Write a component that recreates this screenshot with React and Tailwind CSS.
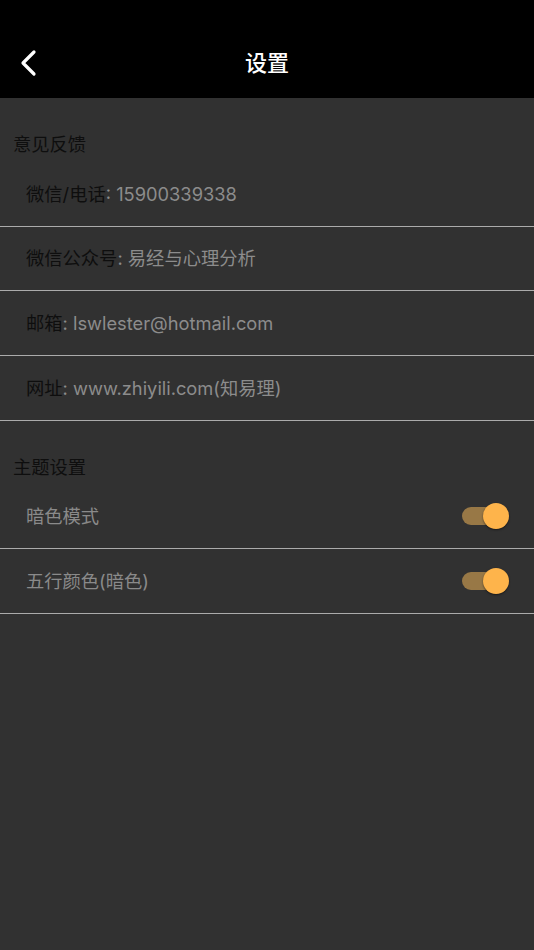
import React from "react";

const font = { fontFamily: 'Inter, "Noto Sans CJK SC", sans-serif' };

function Row({ label, value }) {
  return (
    <div className="h-[64.67px] border-b border-[#ababab] flex items-center pl-[26px] text-[18.3px] leading-[22px] whitespace-pre">
      <span className="text-[#0e0e0e]">{label}</span>
      <span className="text-[#8c8c8c]">{": " + value}</span>
    </div>
  );
}

function ToggleRow({ label }) {
  return (
    <div className="h-[64.67px] border-b border-[#ababab] flex items-center justify-between pl-[26px] pr-[25px] text-[18.3px] leading-[22px]">
      <span className="text-[#8a8a8a]">{label}</span>
      <div className="relative w-[47px] h-[26px] flex items-center">
        <div className="w-[40px] h-[18px] rounded-full bg-[#987846]" />
        <div className="absolute right-0 top-0 w-[26px] h-[26px] rounded-full bg-[#feb44b] shadow-[0_1px_2px_rgba(0,0,0,0.5)]" />
      </div>
    </div>
  );
}

function Section({ title }) {
  return (
    <div className="h-[64px] pt-[35px] pl-[13px] text-[18.3px] leading-[22px] text-[#0e0e0e]">{title}</div>
  );
}

export default function App() {
  return (
    <div className="w-[534px] h-[950px] bg-[#313131] overflow-hidden" style={font}>
      <div className="h-[98px] bg-black relative flex items-center justify-center pt-[28px]">
        <svg className="absolute left-[18px] top-[49px]" width="22" height="28" viewBox="0 0 22 28">
          <path d="M16 3 L5 14 L16 25" stroke="white" strokeWidth="3.2" fill="none" strokeLinecap="round" strokeLinejoin="round" />
        </svg>
        <span className="text-white text-[22px] font-medium leading-[26px]">设置</span>
      </div>
      <Section title="意见反馈" />
      <Row label="微信/电话" value="15900339338" />
      <Row label="微信公众号" value="易经与心理分析" />
      <Row label="邮箱" value="lswlester@hotmail.com" />
      <Row label="网址" value="www.zhiyili.com(知易理)" />
      <Section title="主题设置" />
      <ToggleRow label="暗色模式" />
      <ToggleRow label="五行颜色(暗色)" />
    </div>
  );
}
